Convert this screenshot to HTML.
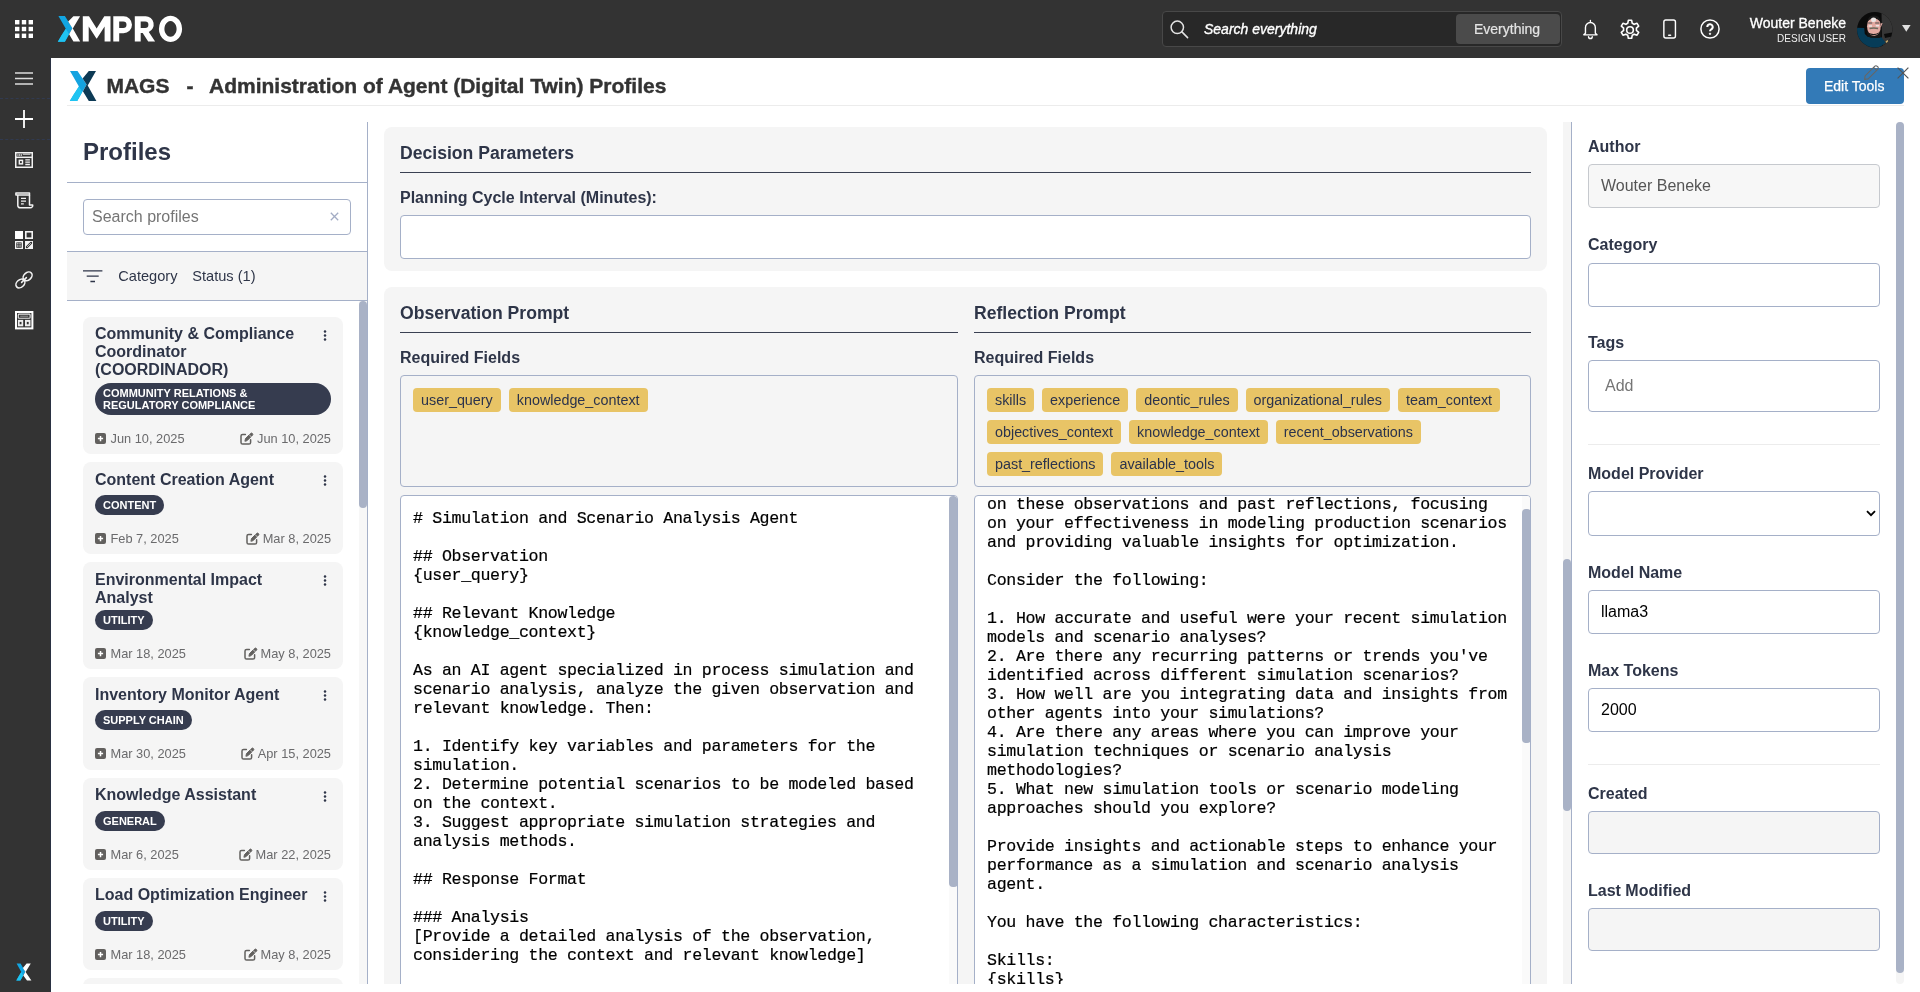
<!DOCTYPE html>
<html>
<head>
<meta charset="utf-8">
<title>MAGS - Administration of Agent (Digital Twin) Profiles</title>
<style>
*{box-sizing:border-box;margin:0;padding:0}
html,body{width:1920px;height:992px;overflow:hidden;background:#fff;font-family:"Liberation Sans",sans-serif;color:#2e3548}
.abs{position:absolute}
#topbar{position:absolute;left:0;top:0;width:1920px;height:58px;background:#333}
#sidebar{position:absolute;left:0;top:58px;width:51px;height:934px;background:#333}
svg{position:absolute;overflow:visible}
.t{position:absolute;white-space:nowrap;line-height:1}
body{will-change:transform}
/* header */
#hdrline{position:absolute;left:67px;top:105px;width:1837px;height:1px;background:#ececec}
/* left panel */
.hline{position:absolute;height:1px;background:#a5b0c8}
.vline{position:absolute;width:1px;background:#a5b0c8}
.card{position:absolute;left:83px;width:260px;background:#f5f5f5;border-radius:8px}
.ctitle{position:absolute;left:12px;font-weight:bold;font-size:16px;line-height:18px;color:#2e3548;white-space:nowrap}
.badge{position:absolute;left:12px;height:20px;border-radius:10px;background:#363c4f;color:#fff;font-size:11px;font-weight:bold;line-height:20px;padding:0 8px;white-space:nowrap}
.date{position:absolute;font-size:12.8px;line-height:13px;color:#6a6a6c;white-space:nowrap}
.thumb{position:absolute;background:#a9b2c6;border-radius:4px}
/* center */
.panel{position:absolute;left:384px;width:1163px;background:#f5f5f5;border-radius:8px}
.h18{position:absolute;font-weight:bold;font-size:18px;line-height:18px;white-space:nowrap;color:#2e3548}
.h16{position:absolute;font-weight:bold;font-size:16px;line-height:16px;white-space:nowrap;color:#2e3548}
.rule{position:absolute;height:1px;background:#3a4052}
.inp{position:absolute;background:#fff;border:1px solid #a5b0c8;border-radius:4px}
.inp.dis{background:#f5f5f5}
.inp.dis2{background:#f7f7f7;border-color:#c6c9ce}
.tag{display:inline-block;margin-right:8px;height:24px;border-radius:4px;background:#e8c466;color:#2b334c;font-size:14.35px;line-height:24px;padding:0 8px;white-space:nowrap}
.mono{position:absolute;font-family:"Liberation Mono",monospace;font-size:16.6px;line-height:19px;color:#000;white-space:pre;-webkit-text-stroke:0.2px #000;letter-spacing:-0.332px}
</style>
</head>
<body>
<!-- TOP BAR -->
<div id="topbar">
 <!-- app grid -->
 <svg style="left:15px;top:20px" width="18" height="18" viewBox="0 0 18 18" fill="#fff">
  <rect x="0" y="0" width="4.4" height="4.4"/><rect x="6.8" y="0" width="4.4" height="4.4"/><rect x="13.6" y="0" width="4.4" height="4.4"/>
  <rect x="0" y="6.8" width="4.4" height="4.4"/><rect x="6.8" y="6.8" width="4.4" height="4.4"/><rect x="13.6" y="6.8" width="4.4" height="4.4"/>
  <rect x="0" y="13.6" width="4.4" height="4.4"/><rect x="6.8" y="13.6" width="4.4" height="4.4"/><rect x="13.6" y="13.6" width="4.4" height="4.4"/>
 </svg>
 <!-- XMPRO logo -->
 <svg style="left:0;top:0" width="200" height="58" viewBox="0 0 200 58">
  <polygon points="58.4,16 64.9,16 72.5,28.3 64.9,41.7 57.8,41.7 65.8,28.7" fill="#12a5e2"/>
  <polygon points="61.5,35.3 65.8,28.7 69,34 64.9,41.7 57.8,41.7" fill="#1fc4f2"/>
  <polygon points="73.4,16.2 80.1,16.2 72.8,28.6 80.2,41.6 73.4,41.6 69.1,34.2 72.4,28.3 68.2,21.6" fill="#fff"/>
  <polygon points="82.8,41.6 82.8,16.2 89,16.2 96.65,28.6 104.3,16.2 110.5,16.2 110.5,41.6 104.6,41.6 104.6,26.6 96.9,38.4 96.4,38.4 88.7,26.6 88.7,41.6" fill="#fff"/>
  <path d="M113.3,16.2 h10.2 a8.5,8.5 0 0 1 0,17 h-4.3 v8.4 h-5.9 Z M119.2,21.5 v6.6 h4 a3.3,3.3 0 0 0 0,-6.6 Z" fill="#fff" fill-rule="evenodd"/>
  <path d="M134.8,16.2 h10.8 a8.2,8.2 0 0 1 3.2,15.7 l6.3,9.7 h-6.9 l-5.5,-8.6 h-2 v8.6 h-5.9 Z M140.7,21.5 v6.4 h4.5 a3.2,3.2 0 0 0 0,-6.4 Z" fill="#fff" fill-rule="evenodd"/>
  <path d="M170.5,15.8 a11.6,13.1 0 1 0 0.01,0 Z M170.5,21.1 a6.1,7.8 0 1 1 -0.01,0 Z" fill="#fff" fill-rule="evenodd"/>
 </svg>
 <!-- search -->
 <div class="abs" style="left:1162px;top:11px;width:400px;height:36px;background:#282828;border:1px solid #484848;border-radius:4px"></div>
 <svg style="left:1170px;top:20px" width="19" height="19" viewBox="0 0 19 19" fill="none" stroke="#e4e4e4" stroke-width="1.5"><circle cx="7.3" cy="7.3" r="6.2"/><path d="M11.9 11.9 L17.6 17.6" stroke-linecap="round"/></svg>
 <div class="t" style="left:1204px;top:22px;font-size:14px;font-style:italic;color:#fff;-webkit-text-stroke:0.35px #fff">Search everything</div>
 <div class="abs" style="left:1456px;top:14px;width:104px;height:30px;background:#4b4b4b;border-radius:4px"></div>
 <div class="t" style="left:1474px;top:22px;font-size:14px;color:#e4e4e4;-webkit-text-stroke:0.2px #e4e4e4">Everything</div>
 <!-- bell -->
 <svg style="left:1581.6px;top:18.8px" width="16.8" height="20.5" viewBox="0 0 18 22" fill="none" stroke="#fff" stroke-width="1.5" stroke-linejoin="round" stroke-linecap="round">
  <path d="M9 1.6 v1.2 M3.7 15.2 V9 a5.3 5.3 0 0 1 10.6 0 v6.2 l1.8 1.8 H1.9 Z"/><path d="M7 19 a2 2 0 0 0 4 0"/>
 </svg>
 <!-- gear -->
 <svg style="left:1620px;top:20px" width="20" height="20" viewBox="1.2 1.2 21.6 21.6" fill="none" stroke="#fff" stroke-width="1.7" stroke-linejoin="round">
  <circle cx="12" cy="12" r="3.6"/>
  <path d="M10.2 1.5 h3.6 l.6 3.2 a7.6 7.6 0 0 1 2.1 1.2 l3.1-1.1 1.8 3.1 -2.5 2.1 a7.6 7.6 0 0 1 0 2.4 l2.5 2.1 -1.8 3.1 -3.1-1.1 a7.6 7.6 0 0 1 -2.1 1.2 l-.6 3.2 h-3.6 l-.6-3.2 a7.6 7.6 0 0 1 -2.1-1.2 l-3.1 1.1 -1.8-3.1 2.5-2.1 a7.6 7.6 0 0 1 0-2.4 l-2.5-2.1 1.8-3.1 3.1 1.1 a7.6 7.6 0 0 1 2.1-1.2 Z"/>
 </svg>
 <!-- phone -->
 <svg style="left:1663.4px;top:19px" width="13.3" height="20" viewBox="0 0 14 20" preserveAspectRatio="none" fill="none" stroke="#fff" stroke-width="1.5"><rect x="0.9" y="0.9" width="12.2" height="18.2" rx="2"/><path d="M6 16.2 h2" stroke-linecap="round"/></svg>
 <!-- help -->
 <svg style="left:1700px;top:19px" width="20" height="20" viewBox="0 0 20 20" fill="none" stroke="#fff" stroke-width="1.5"><circle cx="10" cy="10" r="9.1"/><path d="M7.3 7.9 a2.7 2.7 0 1 1 3.9 2.4 c-.9.5-1.2 1-1.2 2" stroke-width="2"/><circle cx="10" cy="14.8" r="0.7" fill="#fff" stroke-width="1"/></svg>
 <div class="t" style="right:74px;top:15.6px;font-size:14px;color:#fff;-webkit-text-stroke:0.3px #fff">Wouter Beneke</div>
 <div class="t" style="right:74px;top:33.6px;font-size:10px;color:#f0f0f0">DESIGN USER</div>
 <!-- avatar -->
 <svg style="left:1856.7px;top:12.2px" width="35.5" height="35.5" viewBox="0 0 35.5 35.5">
  <defs><clipPath id="av"><circle cx="17.75" cy="17.75" r="17.75"/></clipPath></defs>
  <g clip-path="url(#av)">
   <rect width="36" height="36" fill="#0b0b0b"/>
   <path d="M24.5 0 H36 V36 H27 L25 28 Z" fill="#363636"/>
   <path d="M27 22 L35 20.5 V24.5 L28 26 Z" fill="#0b0b0b"/>
   <path d="M-1 15.6 L7.2 16 L7.8 22 L10.5 24.5 L14 25.6 L22 25.8 L24.2 25 L28.6 30.5 L22 36 H-1 Z" fill="#063c58"/>
   <path d="M9.5 19 L10.5 24.5 L14 25.6 L22 25.8 L24.2 25 L24.6 17 Z" fill="#151515"/>
   <ellipse cx="16.9" cy="14.2" rx="6.9" ry="9.9" fill="#e3aaa2"/>
   <path d="M10.3 9.5 Q11.5 3.2 17 3.4 Q22.6 3.2 23.6 9.8 Q20 6.3 17 6.5 Q13.6 6.3 10.3 9.5Z" fill="#1a1a1a"/>
   <ellipse cx="16.6" cy="7.8" rx="2.6" ry="2.3" fill="#ece6e4"/>
   <path d="M11.2 10.4 h4 v1.2 h-4 Z M18.2 10.4 h4.2 v1.2 h-4.2 Z" fill="#4a4a48"/>
   <path d="M11.6 13.2 h3.4 v1.6 h-3.4 Z M18.8 13 h3.4 v1.6 h-3.4 Z" fill="#ece6e4"/>
   <path d="M12.4 15.8 Q16.8 14.6 21.2 15.8 L21 17.2 Q16.8 16.2 12.6 17.2 Z" fill="#6b6a5c"/>
   <path d="M11 20.6 Q16.5 23.4 22 20.4 L21.8 21.6 Q16.5 24.6 11.2 21.8 Z" fill="#1a1a1a"/>
   <path d="M23.6 11.5 L25.6 11 L24 15 Z" fill="#e3aaa2"/>
   <rect x="29" y="28.5" width="2.6" height="2.6" fill="#c9a86a" transform="rotate(45 30.3 29.8)"/>
  </g>
 </svg>
 <svg style="left:1902px;top:25px" width="9" height="7" viewBox="0 0 9 7"><polygon points="0,0 8.6,0 4.3,6.8" fill="#e0e0e0"/></svg>
</div>
<div id="sidebar">
 <div class="abs" style="left:50px;top:0;width:1px;height:934px;background:#2a3142"></div>
 <div class="abs" style="left:0;top:40px;width:50px;height:0;border-top:1px dashed #313a50"></div>
 <div class="abs" style="left:0;top:81px;width:50px;height:0;border-top:1px dashed #313a50"></div>
 <!-- hamburger (y 72-85 abs => 14-27 rel) -->
 <svg style="left:15px;top:14px" width="18" height="13" viewBox="0 0 18 13" stroke="#ddd" stroke-width="1.5"><path d="M0 .9 h18 M0 6.5 h18 M0 12.1 h18"/></svg>
 <!-- plus (abs y 110-128 => rel 52-70) -->
 <svg style="left:15px;top:52px" width="18" height="18" viewBox="0 0 18 18" stroke="#fff" stroke-width="1.8"><path d="M9 0 v18 M0 9 h18"/></svg>
 <!-- window icon abs y152-168 => rel 94-110 -->
 <svg style="left:15px;top:94px" width="18" height="16" viewBox="0 0 18 16" fill="none" stroke="#f2f2f2" stroke-width="1.5">
  <rect x=".75" y=".75" width="16.5" height="14.5"/><path d="M.75 5.3 h16.5" />
  <path d="M2.4 3 h4.6" stroke-width="1.4" stroke-dasharray="1.1 .6"/><path d="M7.8 2.2 h7.6" stroke-width="1"/>
  <rect x="3.6" y="7.6" width="4.6" height="5" fill="#f2f2f2" stroke="none"/><rect x="5" y="9.1" width="1.8" height="2" fill="#333" stroke="none"/>
  <path d="M10.3 7.9 h4.6 M10.3 10.2 h4.6 M10.3 12.5 h4.6" stroke-width="1.3"/>
 </svg>
 <!-- scroll icon abs y192-208 => rel 134-150 -->
 <svg style="left:15px;top:134px" width="19" height="17" viewBox="0 0 19 17" fill="none" stroke="#f2f2f2" stroke-width="1.5" stroke-linejoin="round">
  <path d="M.9 .9 h13.6 v2.2 h-13.6 Z"/><path d="M2.8 3.1 v10.4 a2.3 2.3 0 0 0 2.3 2.3 h10.3 a2.4 2.4 0 0 0 2.3 -2.9 h-3.2 v-9.8"/>
  <path d="M6 6.4 h5 M6 9.1 h5 M6 11.8 h2.8" stroke-width="1.3"/>
 </svg>
 <!-- 4 grid abs y231-249 => rel 173-191 -->
 <svg style="left:15px;top:173px" width="18" height="18" viewBox="0 0 18 18" fill="none">
  <rect x="0" y="0" width="8" height="8" fill="#fff"/>
  <rect x="10.8" y=".8" width="6.4" height="6.4" stroke="#f4f4f4" stroke-width="1.6"/>
  <rect x="0" y="10" width="8" height="8" fill="#f4f4f4"/>
  <path d="M1.6 11.7 h4.8 v4.8 h-4.8 Z M1.6 13.4 h4.8 M1.6 15 h4.8 M3.3 11.7 v4.8 M4.9 11.7 v4.8" stroke="#333" stroke-width=".7"/>
  <rect x="10" y="10" width="8" height="8" fill="#f4f4f4"/>
  <path d="M11.9 16.1 l4.2-4.2" stroke="#333" stroke-width="2.2" stroke-linecap="round"/><path d="M12 16 l4-4" stroke="#f4f4f4" stroke-width=".7"/>
 </svg>
 <!-- link abs y271-289 => rel 213-231 -->
 <svg style="left:15px;top:213px" width="18" height="18" viewBox="0 0 18 18" fill="none" stroke="#f2f2f2" stroke-width="1.6" stroke-linecap="round">
  <ellipse cx="12.6" cy="5.3" rx="5" ry="3.7" transform="rotate(-42 12.6 5.3)"/>
  <ellipse cx="5.4" cy="12.5" rx="5" ry="3.7" transform="rotate(-42 5.4 12.5)"/>
  <path d="M6.6 11.4 L11.4 6.6" stroke-width="1.5"/>
 </svg>
 <!-- layout abs y311-329 => rel 253-271 -->
 <svg style="left:15px;top:253px" width="18.4" height="18.4" viewBox="0 0 18.4 18.4" fill="none">
  <rect x="1" y="1" width="16.4" height="16.4" stroke="#fff" stroke-width="2"/>
  <rect x="3.3" y="3.1" width="11.8" height="4.2" rx=".8" stroke="#e6e6e6" stroke-width="1.1"/>
  <path d="M5.2 5.2 h8" stroke="#9a9a9a" stroke-width="1"/>
  <rect x="2.9" y="8.9" width="5.3" height="6.4" fill="#efefef"/><rect x="4.6" y="10.9" width="1.9" height="2.4" fill="#333"/>
  <rect x="10" y="8.9" width="5.5" height="6.4" fill="#efefef"/><rect x="11.8" y="10.9" width="1.9" height="2.4" fill="#333"/>
 </svg>
 <!-- bottom X abs (16,963)-(32,981) => rel y 905 -->
 <svg style="left:16px;top:905px" width="16" height="18" viewBox="0 0 16 18">
  <polygon points="0.6,0.6 4.6,0.6 9.3,8.7 4.4,17.4 0.3,17.4 5.3,8.9" fill="#12a5e2"/>
  <polygon points="2.7,13.2 5.3,8.9 7.2,12.4 4.4,17.4 0.3,17.4" fill="#1fc4f2"/>
  <polygon points="10.6,0.6 14.8,0.6 9.6,8.9 15.4,17.4 11,17.4 7.3,12.4 9.3,8.7 6.9,4.9" fill="#fff"/>
 </svg>
</div>
<div id="hdrline"></div>
<!-- HEADER -->
<svg style="left:69px;top:70px" width="28" height="32" viewBox="0 0 28 32">
 <polygon points="1,1 8.5,1 17.6,14.6 8.2,30.9 0.8,30.9 9.9,16.5" fill="#14a3e0"/>
 <polygon points="4.6,24.5 9.9,16.5 13.2,21.8 8.2,30.9 0.8,30.9" fill="#1fc4f2"/>
 <polygon points="19.8,1 27,1 18.7,15.6 27.4,30.9 19.8,30.9 13.9,21.2 17.6,14.6 13.6,8.6" fill="#0d3a55"/>
</svg>
<div class="t" style="left:106.4px;top:75px;font-size:21px;font-weight:bold;color:#333;-webkit-text-stroke:0.4px #333">MAGS</div>
<div class="t" style="left:186.4px;top:75px;font-size:21px;font-weight:bold;color:#333;-webkit-text-stroke:0.4px #333">-</div>
<div class="t" style="left:209px;top:75px;font-size:21px;font-weight:bold;color:#333;-webkit-text-stroke:0.4px #333">Administration of Agent (Digital Twin) Profiles</div>
<div class="abs" style="left:1806px;top:68px;width:98px;height:36px;background:#337ab7;border-radius:4px"></div>
<div class="t" style="left:1824px;top:79px;font-size:14px;color:#fff;-webkit-text-stroke:0.25px #fff">Edit Tools</div>
<svg style="left:1863px;top:64px" width="17" height="17" viewBox="0 0 17 17" fill="none" stroke="#666" stroke-width="1.1" stroke-linejoin="round">
 <path d="M1.6 15.4 l.5-3.6 L11.6 2.3 a1.9 1.9 0 0 1 2.7 0 l.4.4 a1.9 1.9 0 0 1 0 2.7 L5.2 14.9 Z"/><path d="M10.6 3.3 l3.1 3.1"/>
</svg>
<svg style="left:1897px;top:67px" width="12" height="12" viewBox="0 0 12 12" stroke="#555" stroke-width="1.2"><path d="M.6 .6 L11.4 11.4 M11.4 .6 L.6 11.4"/></svg>

<!-- LEFT PANEL -->
<div class="abs" style="left:67px;top:122px;width:301px;height:862px;overflow:hidden">
<div class="t" style="left:16px;top:18px;font-size:24px;font-weight:bold;color:#2e3548">Profiles</div>
<div class="hline" style="left:0;top:60px;width:300px"></div>
<div class="inp" style="left:16px;top:77px;width:268px;height:36px"></div>
<div class="t" style="left:25px;top:87.4px;font-size:16px;color:#757575">Search profiles</div>
<svg style="left:262.5px;top:89.5px" width="9" height="9" viewBox="0 0 9 9" stroke="#a3acc4" stroke-width="1.3"><path d="M.8 .8 L8.2 8.2 M8.2 .8 L.8 8.2"/></svg>
<div class="abs" style="left:0;top:130px;width:300px;height:48px;background:#f5f5f5"></div>
<div class="hline" style="left:0;top:129px;width:300px"></div>
<div class="hline" style="left:0;top:178px;width:300px"></div>
<svg style="left:16px;top:148px" width="20" height="13" viewBox="0 0 20 13" stroke="#2e3548" stroke-width="1.3"><path d="M0 .9 h19.4 M3.7 6.2 h12 M7.4 11.5 h4.6"/></svg>
<div class="t" style="left:51.3px;top:146.8px;font-size:14.6px;color:#2e3548">Category</div>
<div class="t" style="left:125.3px;top:146.8px;font-size:14.6px;color:#2e3548">Status (1)</div>
<div class="vline" style="left:300px;top:0;height:862px"></div>
<div class="abs" style="left:292px;top:179px;width:8px;height:683px;background:#f7f7f7"></div>
<div class="thumb" style="left:292px;top:179.3px;width:8.3px;height:207px"></div>
</div>
<div class="abs" style="left:0;top:0;width:359px;height:983.5px;overflow:hidden">
<div class="card" style="top:316.8px;height:137.2px">
<div class="ctitle" style="top:8.5px">Community &amp; Compliance<br>Coordinator<br>(COORDINADOR)</div>
<svg style="left:240.3px;top:13px" width="4" height="11" viewBox="0 0 4 11" fill="#2e3548"><circle cx="2" cy="1.4" r="1.25"/><circle cx="2" cy="5.5" r="1.25"/><circle cx="2" cy="9.6" r="1.25"/></svg>
<div class="badge" style="top:66.0px;height:32px;border-radius:16px;width:236px;line-height:12px;padding-top:4.2px">COMMUNITY RELATIONS &amp;<br>REGULATORY COMPLIANCE</div>
<svg style="left:12px;top:116.1px" width="11" height="11.2" viewBox="0 0 11 11"><rect width="11" height="11" rx="2" fill="#62605e"/><path d="M5.5 2.9 v5.2 M2.9 5.5 h5.2" stroke="#fff" stroke-width="1.5"/></svg>
<div class="date" style="left:27.5px;top:115.0px">Jun 10, 2025</div>
<div class="date" style="right:12px;top:115.0px"><svg style="position:relative;display:inline-block;vertical-align:-2px;margin-right:3px" width="14" height="13" viewBox="0 0 14 13" fill="none" stroke="#62605e" stroke-width="1.5" stroke-linejoin="round" stroke-linecap="round"><path d="M5.4 2.4 H2.6 a1.6 1.6 0 0 0 -1.6 1.6 v6.4 a1.6 1.6 0 0 0 1.6 1.6 h6.4 a1.6 1.6 0 0 0 1.6 -1.6 V7.8"/><path d="M5 8.9 l.5-2.3 L10.6 1.5 a1.25 1.25 0 0 1 1.8 1.8 L7.3 8.4 Z" fill="#62605e" stroke-width="1"/><path d="M9.1 2.6 L11.4 4.9" stroke="#f5f5f5" stroke-width="0.7"/></svg>Jun 10, 2025</div>
</div>
<div class="card" style="top:462.0px;height:92.2px">
<div class="ctitle" style="top:8.5px">Content Creation Agent</div>
<svg style="left:240.3px;top:13px" width="4" height="11" viewBox="0 0 4 11" fill="#2e3548"><circle cx="2" cy="1.4" r="1.25"/><circle cx="2" cy="5.5" r="1.25"/><circle cx="2" cy="9.6" r="1.25"/></svg>
<div class="badge" style="top:33.0px">CONTENT</div>
<svg style="left:12px;top:71.1px" width="11" height="11.2" viewBox="0 0 11 11"><rect width="11" height="11" rx="2" fill="#62605e"/><path d="M5.5 2.9 v5.2 M2.9 5.5 h5.2" stroke="#fff" stroke-width="1.5"/></svg>
<div class="date" style="left:27.5px;top:70.0px">Feb 7, 2025</div>
<div class="date" style="right:12px;top:70.0px"><svg style="position:relative;display:inline-block;vertical-align:-2px;margin-right:3px" width="14" height="13" viewBox="0 0 14 13" fill="none" stroke="#62605e" stroke-width="1.5" stroke-linejoin="round" stroke-linecap="round"><path d="M5.4 2.4 H2.6 a1.6 1.6 0 0 0 -1.6 1.6 v6.4 a1.6 1.6 0 0 0 1.6 1.6 h6.4 a1.6 1.6 0 0 0 1.6 -1.6 V7.8"/><path d="M5 8.9 l.5-2.3 L10.6 1.5 a1.25 1.25 0 0 1 1.8 1.8 L7.3 8.4 Z" fill="#62605e" stroke-width="1"/><path d="M9.1 2.6 L11.4 4.9" stroke="#f5f5f5" stroke-width="0.7"/></svg>Mar 8, 2025</div>
</div>
<div class="card" style="top:562.2px;height:107.2px">
<div class="ctitle" style="top:8.5px">Environmental Impact<br>Analyst</div>
<svg style="left:240.3px;top:13px" width="4" height="11" viewBox="0 0 4 11" fill="#2e3548"><circle cx="2" cy="1.4" r="1.25"/><circle cx="2" cy="5.5" r="1.25"/><circle cx="2" cy="9.6" r="1.25"/></svg>
<div class="badge" style="top:48.0px">UTILITY</div>
<svg style="left:12px;top:86.1px" width="11" height="11.2" viewBox="0 0 11 11"><rect width="11" height="11" rx="2" fill="#62605e"/><path d="M5.5 2.9 v5.2 M2.9 5.5 h5.2" stroke="#fff" stroke-width="1.5"/></svg>
<div class="date" style="left:27.5px;top:85.0px">Mar 18, 2025</div>
<div class="date" style="right:12px;top:85.0px"><svg style="position:relative;display:inline-block;vertical-align:-2px;margin-right:3px" width="14" height="13" viewBox="0 0 14 13" fill="none" stroke="#62605e" stroke-width="1.5" stroke-linejoin="round" stroke-linecap="round"><path d="M5.4 2.4 H2.6 a1.6 1.6 0 0 0 -1.6 1.6 v6.4 a1.6 1.6 0 0 0 1.6 1.6 h6.4 a1.6 1.6 0 0 0 1.6 -1.6 V7.8"/><path d="M5 8.9 l.5-2.3 L10.6 1.5 a1.25 1.25 0 0 1 1.8 1.8 L7.3 8.4 Z" fill="#62605e" stroke-width="1"/><path d="M9.1 2.6 L11.4 4.9" stroke="#f5f5f5" stroke-width="0.7"/></svg>May 8, 2025</div>
</div>
<div class="card" style="top:677.4px;height:92.2px">
<div class="ctitle" style="top:8.5px">Inventory Monitor Agent</div>
<svg style="left:240.3px;top:13px" width="4" height="11" viewBox="0 0 4 11" fill="#2e3548"><circle cx="2" cy="1.4" r="1.25"/><circle cx="2" cy="5.5" r="1.25"/><circle cx="2" cy="9.6" r="1.25"/></svg>
<div class="badge" style="top:33.0px">SUPPLY CHAIN</div>
<svg style="left:12px;top:71.1px" width="11" height="11.2" viewBox="0 0 11 11"><rect width="11" height="11" rx="2" fill="#62605e"/><path d="M5.5 2.9 v5.2 M2.9 5.5 h5.2" stroke="#fff" stroke-width="1.5"/></svg>
<div class="date" style="left:27.5px;top:70.0px">Mar 30, 2025</div>
<div class="date" style="right:12px;top:70.0px"><svg style="position:relative;display:inline-block;vertical-align:-2px;margin-right:3px" width="14" height="13" viewBox="0 0 14 13" fill="none" stroke="#62605e" stroke-width="1.5" stroke-linejoin="round" stroke-linecap="round"><path d="M5.4 2.4 H2.6 a1.6 1.6 0 0 0 -1.6 1.6 v6.4 a1.6 1.6 0 0 0 1.6 1.6 h6.4 a1.6 1.6 0 0 0 1.6 -1.6 V7.8"/><path d="M5 8.9 l.5-2.3 L10.6 1.5 a1.25 1.25 0 0 1 1.8 1.8 L7.3 8.4 Z" fill="#62605e" stroke-width="1"/><path d="M9.1 2.6 L11.4 4.9" stroke="#f5f5f5" stroke-width="0.7"/></svg>Apr 15, 2025</div>
</div>
<div class="card" style="top:777.6px;height:92.2px">
<div class="ctitle" style="top:8.5px">Knowledge Assistant</div>
<svg style="left:240.3px;top:13px" width="4" height="11" viewBox="0 0 4 11" fill="#2e3548"><circle cx="2" cy="1.4" r="1.25"/><circle cx="2" cy="5.5" r="1.25"/><circle cx="2" cy="9.6" r="1.25"/></svg>
<div class="badge" style="top:33.0px">GENERAL</div>
<svg style="left:12px;top:71.1px" width="11" height="11.2" viewBox="0 0 11 11"><rect width="11" height="11" rx="2" fill="#62605e"/><path d="M5.5 2.9 v5.2 M2.9 5.5 h5.2" stroke="#fff" stroke-width="1.5"/></svg>
<div class="date" style="left:27.5px;top:70.0px">Mar 6, 2025</div>
<div class="date" style="right:12px;top:70.0px"><svg style="position:relative;display:inline-block;vertical-align:-2px;margin-right:3px" width="14" height="13" viewBox="0 0 14 13" fill="none" stroke="#62605e" stroke-width="1.5" stroke-linejoin="round" stroke-linecap="round"><path d="M5.4 2.4 H2.6 a1.6 1.6 0 0 0 -1.6 1.6 v6.4 a1.6 1.6 0 0 0 1.6 1.6 h6.4 a1.6 1.6 0 0 0 1.6 -1.6 V7.8"/><path d="M5 8.9 l.5-2.3 L10.6 1.5 a1.25 1.25 0 0 1 1.8 1.8 L7.3 8.4 Z" fill="#62605e" stroke-width="1"/><path d="M9.1 2.6 L11.4 4.9" stroke="#f5f5f5" stroke-width="0.7"/></svg>Mar 22, 2025</div>
</div>
<div class="card" style="top:877.8px;height:92.2px">
<div class="ctitle" style="top:8.5px">Load Optimization Engineer</div>
<svg style="left:240.3px;top:13px" width="4" height="11" viewBox="0 0 4 11" fill="#2e3548"><circle cx="2" cy="1.4" r="1.25"/><circle cx="2" cy="5.5" r="1.25"/><circle cx="2" cy="9.6" r="1.25"/></svg>
<div class="badge" style="top:33.0px">UTILITY</div>
<svg style="left:12px;top:71.1px" width="11" height="11.2" viewBox="0 0 11 11"><rect width="11" height="11" rx="2" fill="#62605e"/><path d="M5.5 2.9 v5.2 M2.9 5.5 h5.2" stroke="#fff" stroke-width="1.5"/></svg>
<div class="date" style="left:27.5px;top:70.0px">Mar 18, 2025</div>
<div class="date" style="right:12px;top:70.0px"><svg style="position:relative;display:inline-block;vertical-align:-2px;margin-right:3px" width="14" height="13" viewBox="0 0 14 13" fill="none" stroke="#62605e" stroke-width="1.5" stroke-linejoin="round" stroke-linecap="round"><path d="M5.4 2.4 H2.6 a1.6 1.6 0 0 0 -1.6 1.6 v6.4 a1.6 1.6 0 0 0 1.6 1.6 h6.4 a1.6 1.6 0 0 0 1.6 -1.6 V7.8"/><path d="M5 8.9 l.5-2.3 L10.6 1.5 a1.25 1.25 0 0 1 1.8 1.8 L7.3 8.4 Z" fill="#62605e" stroke-width="1"/><path d="M9.1 2.6 L11.4 4.9" stroke="#f5f5f5" stroke-width="0.7"/></svg>May 8, 2025</div>
</div>
<div class="card" style="top:978.0px;height:92.2px">
<div class="ctitle" style="top:8.5px">&nbsp;</div>
<svg style="left:240.3px;top:13px" width="4" height="11" viewBox="0 0 4 11" fill="#2e3548"><circle cx="2" cy="1.4" r="1.25"/><circle cx="2" cy="5.5" r="1.25"/><circle cx="2" cy="9.6" r="1.25"/></svg>
</div>
</div>
<!-- CENTER -->
<div class="abs" style="left:368px;top:106px;width:1204px;height:877.5px;overflow:hidden">
<div class="panel" style="left:16px;top:21px;height:144px"></div>
<div class="h18" style="left:32px;top:38px;font-size:17.6px">Decision Parameters</div>
<div class="rule" style="left:32px;top:66px;width:1131px"></div>
<div class="h16" style="left:32px;top:84px">Planning Cycle Interval (Minutes):</div>
<div class="inp" style="left:32px;top:109px;width:1131px;height:44px"></div>
<div class="panel" style="left:16px;top:181px;height:760px"></div>
<div class="h18" style="left:32px;top:198px;font-size:17.6px">Observation Prompt</div>
<div class="rule" style="left:32px;top:225.5px;width:558px"></div>
<div class="h16" style="left:32px;top:244px">Required Fields</div>
<div class="inp" style="left:32px;top:269px;width:558px;height:112px;background:#f5f5f5"></div>
<div class="abs" style="left:45px;top:282px;white-space:nowrap"><span class="tag">user_query</span><span class="tag">knowledge_context</span></div>
<div class="h18" style="left:606px;top:198px;font-size:17.6px">Reflection Prompt</div>
<div class="rule" style="left:606px;top:225.5px;width:557px"></div>
<div class="h16" style="left:606px;top:244px">Required Fields</div>
<div class="inp" style="left:606px;top:269px;width:557px;height:112px;background:#f5f5f5"></div>
<div class="abs" style="left:619px;top:282px;white-space:nowrap"><span class="tag">skills</span><span class="tag">experience</span><span class="tag">deontic_rules</span><span class="tag">organizational_rules</span><span class="tag">team_context</span></div>
<div class="abs" style="left:619px;top:314px;white-space:nowrap"><span class="tag">objectives_context</span><span class="tag">knowledge_context</span><span class="tag">recent_observations</span></div>
<div class="abs" style="left:619px;top:346px;white-space:nowrap"><span class="tag">past_reflections</span><span class="tag">available_tools</span></div>
<div class="inp" style="left:32px;top:389px;width:558px;height:520px;overflow:hidden"><div class="mono" style="left:12px;top:13.1px"># Simulation and Scenario Analysis Agent

## Observation
{user_query}

## Relevant Knowledge
{knowledge_context}

As an AI agent specialized in process simulation and
scenario analysis, analyze the given observation and
relevant knowledge. Then:

1. Identify key variables and parameters for the
simulation.
2. Determine potential scenarios to be modeled based
on the context.
3. Suggest appropriate simulation strategies and
analysis methods.

## Response Format

### Analysis
[Provide a detailed analysis of the observation,
considering the context and relevant knowledge]

### Simulation Plan</div><div class="abs" style="right:-1px;top:0;width:9px;height:520px;background:#fafafa"></div><div class="thumb" style="right:-1px;top:0px;width:9px;height:391px"></div></div>
<div class="inp" style="left:606px;top:389px;width:557px;height:520px;overflow:hidden"><div class="mono" style="left:12px;top:-0.9px">on these observations and past reflections, focusing
on your effectiveness in modeling production scenarios
and providing valuable insights for optimization.

Consider the following:

1. How accurate and useful were your recent simulation
models and scenario analyses?
2. Are there any recurring patterns or trends you've
identified across different simulation scenarios?
3. How well are you integrating data and insights from
other agents into your simulations?
4. Are there any areas where you can improve your
simulation techniques or scenario analysis
methodologies?
5. What new simulation tools or scenario modeling
approaches should you explore?

Provide insights and actionable steps to enhance your
performance as a simulation and scenario analysis
agent.

You have the following characteristics:

Skills:
{skills}

Experience:</div><div class="abs" style="right:-1px;top:0;width:9px;height:520px;background:#fafafa"></div><div class="thumb" style="right:-1px;top:12.7px;width:9px;height:234px"></div></div>
<div class="abs" style="left:1195px;top:16px;width:8px;height:862px;background:#f5f5f5"></div>
<div class="thumb" style="left:1195px;top:453px;width:8.3px;height:252px"></div>
</div>
<!-- RIGHT PANEL -->
<div class="vline" style="left:1571px;top:122px;height:862px"></div>
<div class="h16" style="left:1588px;top:138.5px">Author</div>
<div class="inp dis2" style="left:1588px;top:164px;width:292px;height:44px"></div>
<div class="t" style="left:1601px;top:177.8px;font-size:16px;color:#555">Wouter Beneke</div>
<div class="h16" style="left:1588px;top:236.5px">Category</div>
<div class="inp" style="left:1588px;top:262.5px;width:292px;height:44px"></div>
<div class="h16" style="left:1588px;top:334.5px">Tags</div>
<div class="inp" style="left:1588px;top:360px;width:292px;height:51.5px"></div>
<div class="t" style="left:1605px;top:377.6px;font-size:16px;color:#757575">Add</div>
<div class="abs" style="left:1588px;top:444px;width:292px;height:1px;background:#ececec"></div>
<div class="h16" style="left:1588px;top:465.5px">Model Provider</div>
<div class="inp" style="left:1588px;top:491px;width:292px;height:44.5px"></div>
<svg style="left:1866px;top:510px" width="10" height="7" viewBox="0 0 10 7" fill="none" stroke="#000" stroke-width="1.8"><path d="M1 1.2 L5 5.2 L9 1.2"/></svg>
<div class="h16" style="left:1588px;top:564.5px">Model Name</div>
<div class="inp" style="left:1588px;top:590px;width:292px;height:44px"></div>
<div class="t" style="left:1601px;top:603.8px;font-size:16px;color:#000">llama3</div>
<div class="h16" style="left:1588px;top:662.5px">Max Tokens</div>
<div class="inp" style="left:1588px;top:688px;width:292px;height:44px"></div>
<div class="t" style="left:1601px;top:701.8px;font-size:16px;color:#000">2000</div>
<div class="abs" style="left:1588px;top:764px;width:292px;height:1px;background:#ececec"></div>
<div class="h16" style="left:1588px;top:785.5px">Created</div>
<div class="inp dis" style="left:1588px;top:811px;width:292px;height:43px"></div>
<div class="h16" style="left:1588px;top:882.5px">Last Modified</div>
<div class="inp dis" style="left:1588px;top:908.3px;width:292px;height:42.7px"></div>
<div class="abs" style="left:1896px;top:122px;width:8px;height:861.5px;background:#f5f5f5;border-radius:4px"></div>
<div class="thumb" style="left:1896px;top:122px;width:8.2px;height:850.5px"></div>
</body>
</html>
